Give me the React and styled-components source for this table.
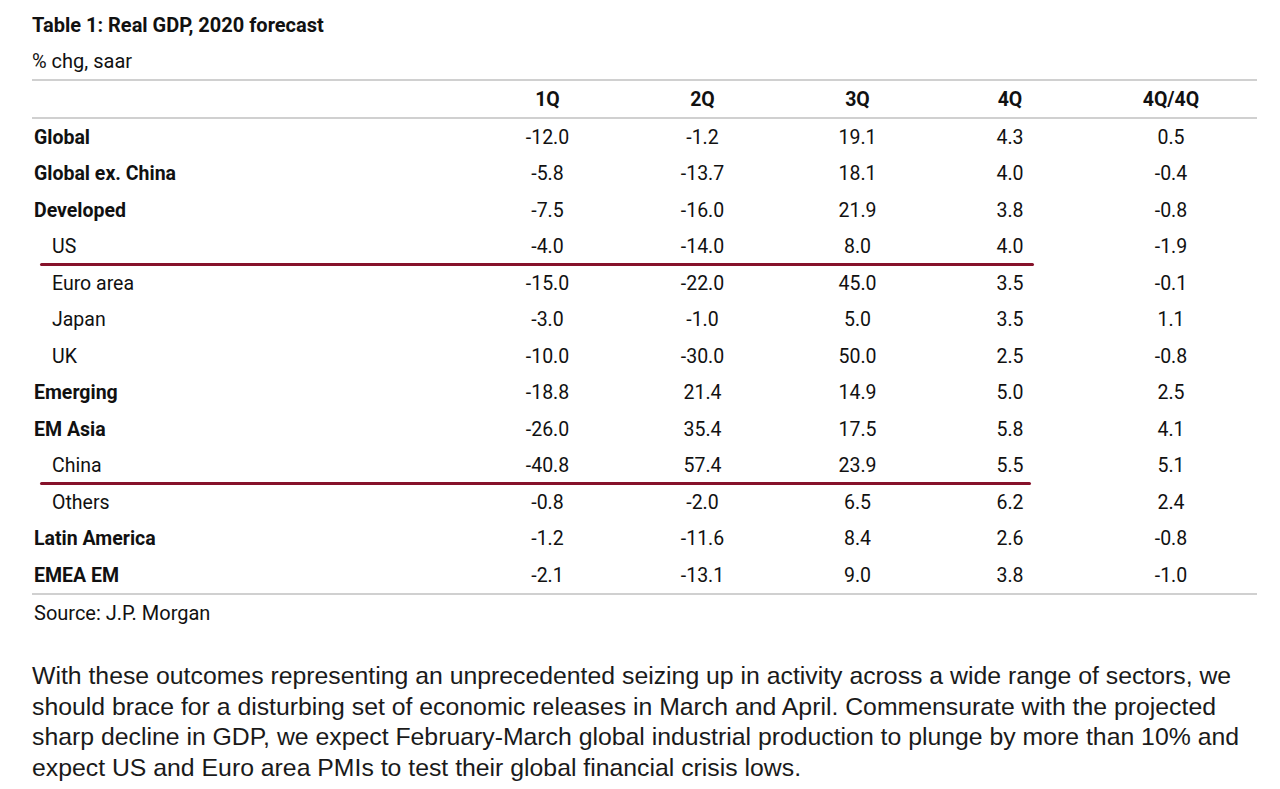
import React from "react";
import styled, { createGlobalStyle } from "styled-components";

const Global = createGlobalStyle`
  html, body { margin: 0; padding: 0; background: #fff; }
  body { font-family: Roboto, "Liberation Sans", sans-serif; color: #111; }
`;

const Page = styled.div`
  width: 1280px;
  padding: 12px 23px 0 32px;
  box-sizing: border-box;
`;

const Title = styled.div`
  font-weight: 700;
  font-size: 20px;
  line-height: 26px;
`;

const Subtitle = styled.div`
  font-size: 20px;
  line-height: 26px;
  margin-top: 10px;
  padding-bottom: 5px;
  border-bottom: 2px solid #d0d0d0;
`;

const Row = styled.div`
  position: relative;
  display: grid;
  grid-template-columns: 438px 155px 155px 155px 150px 1fr;
  align-items: center;
  height: ${(p) => p.$h || 36.5}px;
  font-size: 19.5px;
  border-bottom: ${(p) => (p.$rule ? "2px solid #d0d0d0" : "none")};
  box-sizing: border-box;
  ${(p) =>
    p.$red &&
    `&::after {
      content: "";
      position: absolute;
      left: 8px;
      width: ${p.$redW}px;
      bottom: -1px;
      height: 3px;
      border-radius: 2px;
      background: #86122a;
    }`}
`;

const Label = styled.div`
  font-weight: ${(p) => (p.$bold ? 700 : 400)};
  padding-left: ${(p) => (p.$indent ? 20 : 2)}px;
`;

const Cell = styled.div`
  text-align: center;
  font-weight: ${(p) => (p.$bold ? 700 : 400)};
`;

const Source = styled.div`
  font-size: 20px;
  line-height: 26px;
  margin-top: 5px;
  padding-left: 2px;
`;

const Para = styled.p`
  margin: 35px 0 0 0;
  font-family: "Liberation Sans", Arial, sans-serif;
  font-size: 24.8px;
  line-height: 30.7px;
  color: #1a1a1a;
  width: 1240px;
`;

const rows = [
  { l: "Global", b: true, v: ["-12.0", "-1.2", "19.1", "4.3", "0.5"] },
  { l: "Global ex. China", b: true, v: ["-5.8", "-13.7", "18.1", "4.0", "-0.4"] },
  { l: "Developed", b: true, v: ["-7.5", "-16.0", "21.9", "3.8", "-0.8"] },
  { l: "US", i: true, red: true, v: ["-4.0", "-14.0", "8.0", "4.0", "-1.9"] },
  { l: "Euro area", i: true, v: ["-15.0", "-22.0", "45.0", "3.5", "-0.1"] },
  { l: "Japan", i: true, v: ["-3.0", "-1.0", "5.0", "3.5", "1.1"] },
  { l: "UK", i: true, v: ["-10.0", "-30.0", "50.0", "2.5", "-0.8"] },
  { l: "Emerging", b: true, v: ["-18.8", "21.4", "14.9", "5.0", "2.5"] },
  { l: "EM Asia", b: true, v: ["-26.0", "35.4", "17.5", "5.8", "4.1"] },
  { l: "China", i: true, red: true, v: ["-40.8", "57.4", "23.9", "5.5", "5.1"] },
  { l: "Others", i: true, v: ["-0.8", "-2.0", "6.5", "6.2", "2.4"] },
  { l: "Latin America", b: true, v: ["-1.2", "-11.6", "8.4", "2.6", "-0.8"] },
  { l: "EMEA EM", b: true, v: ["-2.1", "-13.1", "9.0", "3.8", "-1.0"] },
];

export default function App() {
  return (
    <>
      <Global />
      <Page>
        <Title>Table 1: Real GDP, 2020 forecast</Title>
        <Subtitle>% chg, saar</Subtitle>
        <Row $h={38} $rule>
          <Label />
          {["1Q", "2Q", "3Q", "4Q", "4Q/4Q"].map((h) => (
            <Cell key={h} $bold>
              {h}
            </Cell>
          ))}
        </Row>
        {rows.map((r, idx) => (
          <Row
            key={r.l}
            $red={r.red}
            $redW={r.l === "US" ? 994 : 991}
            $rule={idx === rows.length - 1}
            $h={idx === rows.length - 1 ? 38 : 36.5}
          >
            <Label $bold={r.b} $indent={r.i}>
              {r.l}
            </Label>
            {r.v.map((v, k) => (
              <Cell key={k}>{v}</Cell>
            ))}
          </Row>
        ))}
        <Source>Source: J.P. Morgan</Source>
        <Para>
          With these outcomes representing an unprecedented seizing up in activity across a wide range of sectors, we
          should brace for a disturbing set of economic releases in March and April. Commensurate with the projected
          sharp decline in GDP, we expect February-March global industrial production to plunge by more than 10% and
          expect US and Euro area PMIs to test their global financial crisis lows.
        </Para>
      </Page>
    </>
  );
}
